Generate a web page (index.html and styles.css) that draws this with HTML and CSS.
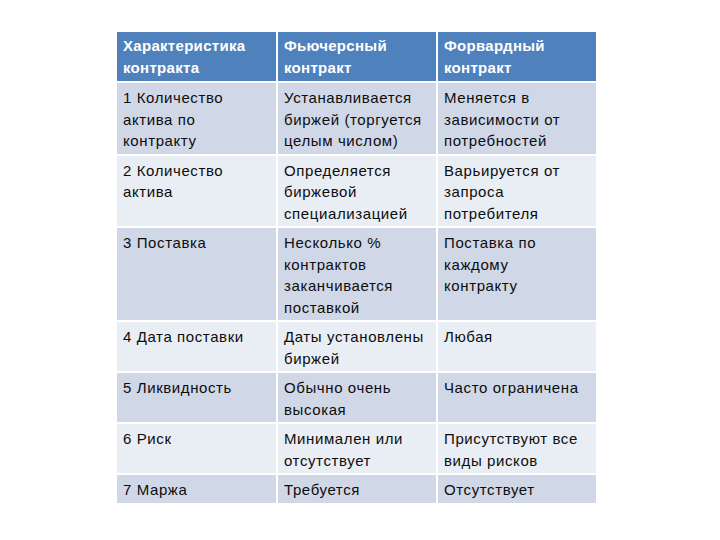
FILE: index.html
```html
<!DOCTYPE html>
<html lang="ru">
<head>
<meta charset="utf-8">
<link rel="stylesheet" href="styles.css">
</head>
<body>
<div class="table">
  <div class="cell head">Характеристика контракта</div>
  <div class="cell head">Фьючерсный контракт</div>
  <div class="cell head">Форвардный контракт</div>

  <div class="cell odd">1 Количество актива по контракту</div>
  <div class="cell odd">Устанавливается биржей (торгуется целым числом)</div>
  <div class="cell odd">Меняется в зависимости от потребностей</div>

  <div class="cell even">2 Количество актива</div>
  <div class="cell even">Определяется биржевой специализацией</div>
  <div class="cell even">Варьируется от запроса потребителя</div>

  <div class="cell odd">3 Поставка</div>
  <div class="cell odd">Несколько % контрактов заканчивается поставкой</div>
  <div class="cell odd">Поставка по каждому<br>контракту</div>

  <div class="cell even">4 Дата поставки</div>
  <div class="cell even">Даты установлены биржей</div>
  <div class="cell even">Любая</div>

  <div class="cell odd">5 Ликвидность</div>
  <div class="cell odd">Обычно очень высокая</div>
  <div class="cell odd">Часто ограничена</div>

  <div class="cell even">6 Риск</div>
  <div class="cell even">Минимален или отсутствует</div>
  <div class="cell even">Присутствуют все виды рисков</div>

  <div class="cell odd">7 Маржа</div>
  <div class="cell odd">Требуется</div>
  <div class="cell odd">Отсутствует</div>
</div>
</body>
</html>
```

FILE: styles.css
```css
html, body {
  margin: 0;
  padding: 0;
  background: #ffffff;
}

body {
  width: 720px;
  height: 540px;
  overflow: hidden;
  font-family: "Liberation Sans", Arial, sans-serif;
}

.table {
  display: grid;
  grid-template-columns: 159px 158px 158px;
  gap: 2px;
  margin: 32px 0 0 117px;
  width: 479px;
}

.cell {
  padding: 4px 6px 2px 6px;
  font-size: 15px;
  line-height: 21.5px;
  color: #0d0d0d;
  letter-spacing: 0.6px;
}

.head {
  background: #4f81bd;
  color: #ffffff;
  font-weight: bold;
  letter-spacing: 0.3px;
  padding-top: 3px;
  padding-bottom: 3px;
}

.odd {
  background: #d0d8e8;
}

.even {
  background: #e9edf4;
}
```
